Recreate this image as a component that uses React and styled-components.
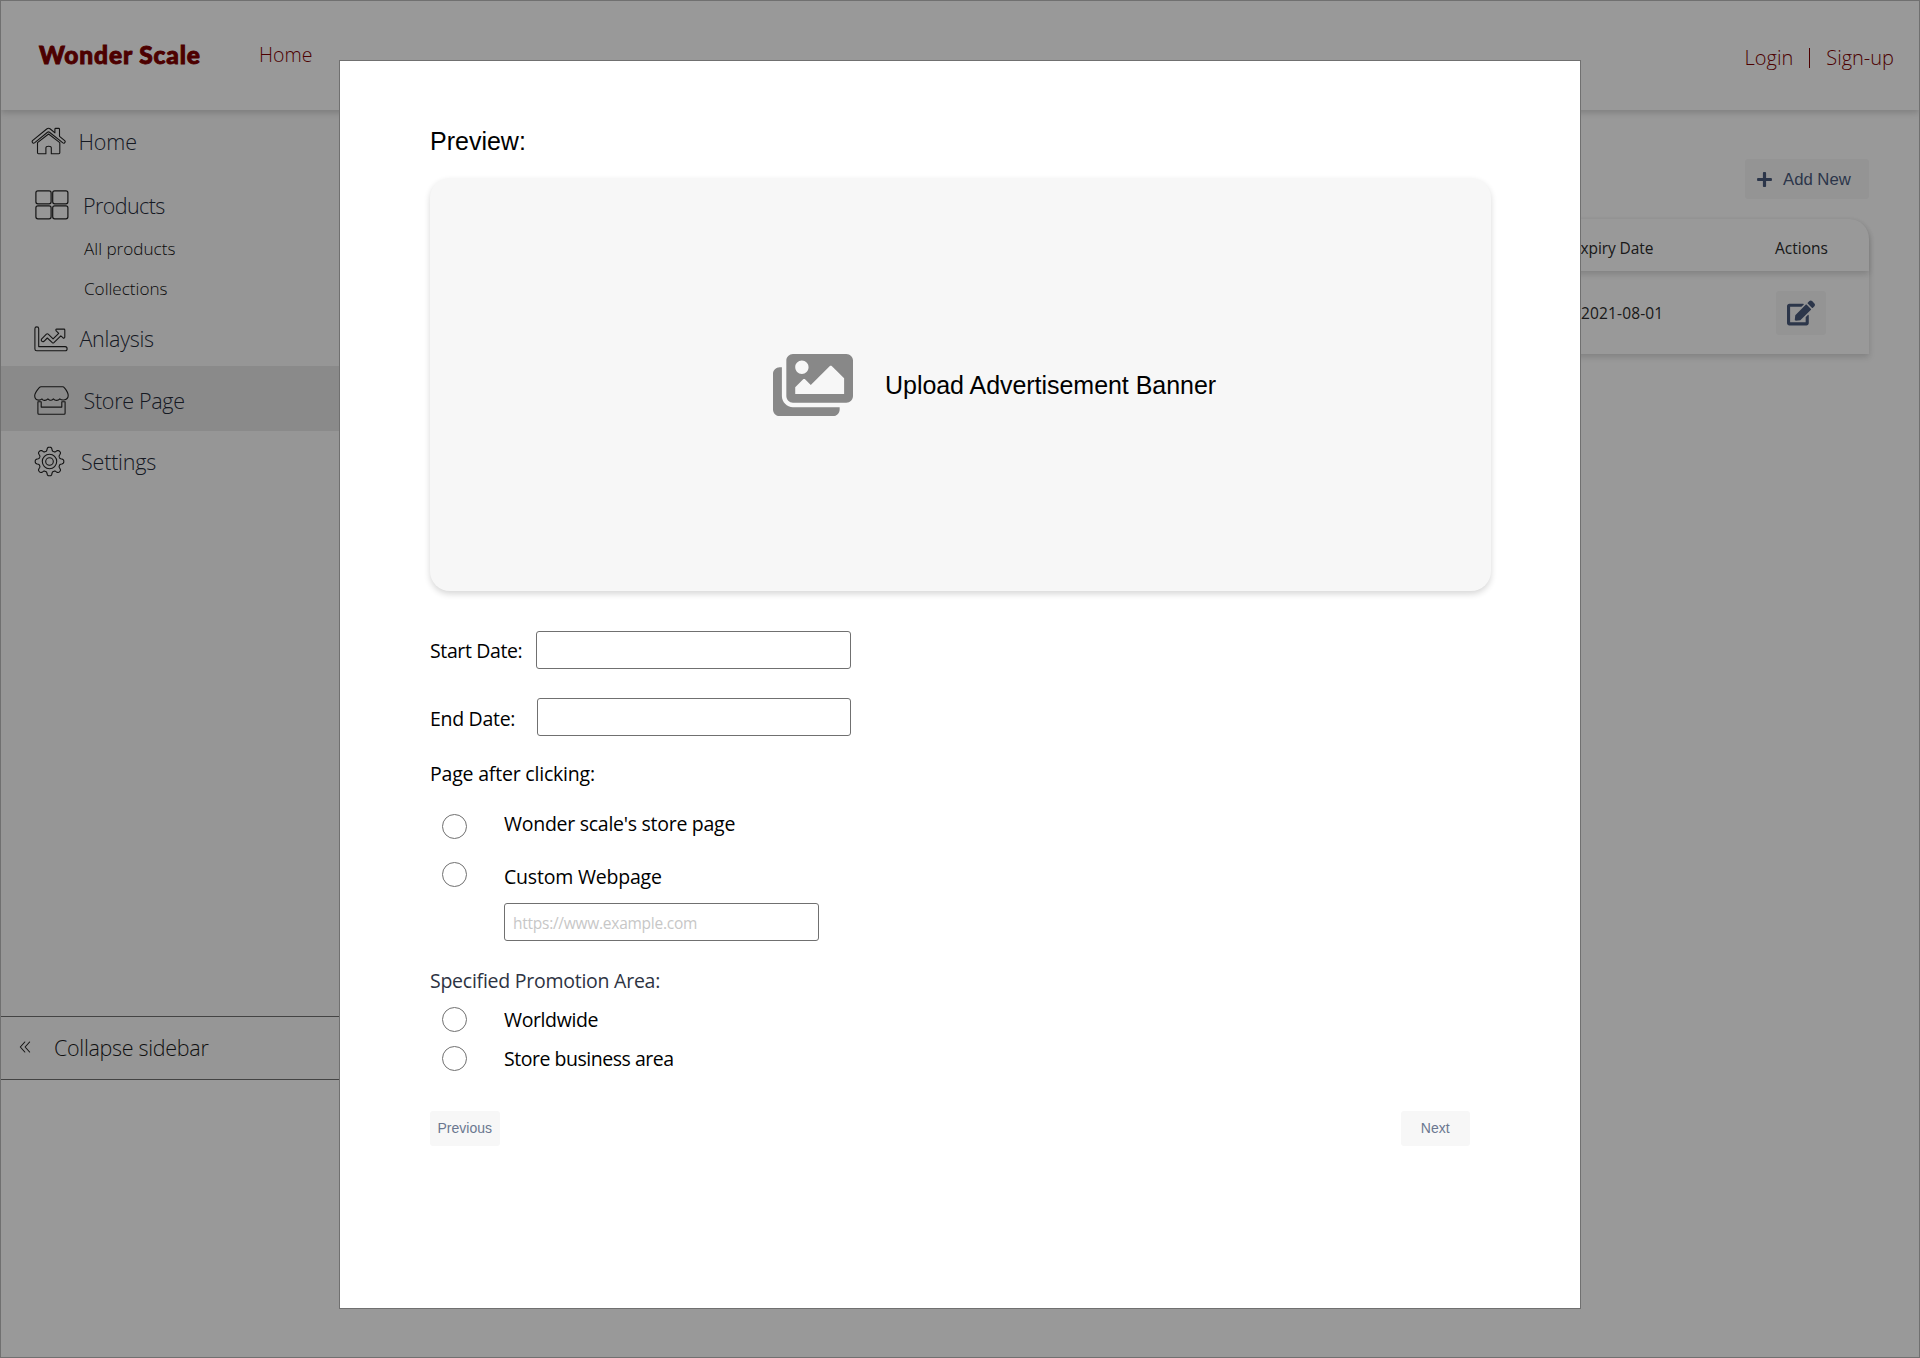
import React from 'react';
import styled, { createGlobalStyle, css } from 'styled-components';
import { FaPlus, FaEdit, FaImages } from 'react-icons/fa';

const GlobalStyle = createGlobalStyle`
  *, *::before, *::after { box-sizing: border-box; }
  body { margin: 0; background: #fff; }
`;

const ui = css`font-family: "Open Sans", "Noto Sans", sans-serif;`;
const arial = css`font-family: "Liberation Sans", Arial, sans-serif;`;
const softShadow = css`box-shadow: 0 3px 6px rgba(0, 0, 0, 0.16);`;

const Page = styled.div`
  ${ui}
  position: relative;
  width: 1920px;
  height: 1358px;
  padding: 1px;
  overflow: hidden;
  background: #fff;
  display: flex;
  flex-direction: column;
  white-space: nowrap;
`;

/* Header */
const Header = styled.header`
  ${softShadow}
  position: relative;
  flex: none;
  height: 109px;
  padding: 0 25px 2px 38px;
  display: flex;
  align-items: center;
  background: #fff;
  color: #800000;
`;
const Logo = styled.div`
  width: 220px;
  font: 900 24.5px/30px Lato, sans-serif;
  letter-spacing: 0.88px;
  -webkit-text-stroke: 0.9px #800000;
`;
const NavLink = styled.a`
  font-size: ${(p) => p.$size || 20}px;
  line-height: 28px;
  font-weight: 300;
  margin-top: ${(p) => p.$drop || 0}px;
`;
const Account = styled.div`
  margin: 7px 0 0 auto;
  display: flex;
  align-items: center;
  gap: 16px;
`;
const Divider = styled.span`
  width: 1px;
  height: 20px;
  background: #800000;
`;

/* Sidebar */
const Body = styled.div`
  flex: 1;
  display: flex;
  align-items: flex-start;
`;
const Sidebar = styled.aside`
  width: 338px;
  height: 970px;
  background: #fafafa;
  display: flex;
  flex-direction: column;
  color: #262c3a;
`;
const Item = styled.div`
  flex: none;
  height: ${(p) => p.$height}px;
  padding-left: ${(p) => p.$indent}px;
  padding-top: ${(p) => p.$drop || 0}px;
  display: flex;
  align-items: center;
  background: ${(p) => (p.$active ? '#e6e6e6' : 'transparent')};
`;
const ItemLabel = styled.span`
  margin-left: ${(p) => p.$gap}px;
  margin-top: ${(p) => p.$drop || 0}px;
  font-size: 21.5px;
  line-height: 30px;
  font-weight: 300;
  letter-spacing: ${(p) => p.$track || 0}px;
`;
const SubList = styled.div`
  display: flex;
  flex-direction: column;
  gap: 19px;
  padding: 0 0 13px 83px;
  color: #111;
`;
const SubItem = styled.a`
  font-size: 17.1px;
  line-height: 21px;
  font-weight: 300;
`;
const Collapse = styled.div`
  height: 64px;
  margin-top: auto;
  padding: 0 0 2px 17.5px;
  display: flex;
  align-items: center;
  border: solid #707070;
  border-width: 1px 0;
  color: #1c1c1c;
`;
const Outline = styled.svg`
  flex: none;
  display: block;
  fill: none;
  stroke: #222;
  stroke-width: ${(p) => p.$weight || 1.1};
  stroke-linejoin: round;
  stroke-linecap: round;
`;

/* Main panel */
const Main = styled.main`
  flex: 1;
  padding: 49px 50px 0 0;
  display: flex;
  flex-direction: column;
  align-items: flex-end;
`;
const AddButton = styled.button`
  ${arial}
  width: 124px;
  height: 40px;
  padding: 1px 0 0 11px;
  display: flex;
  align-items: center;
  gap: 10px;
  border: 0;
  border-radius: 3px;
  background: #f7f7f7;
  color: #4a5a7c;
  font-size: 16.7px;
`;
const Table = styled.div`
  ${softShadow}
  width: 1400px;
  margin-top: 20px;
  border-radius: 20px 20px 0 0;
  background: #fff;
  font-size: 15.5px;
  line-height: 22px;
  color: #2c2c2c;
`;
const TableRow = styled.div`
  height: ${(p) => (p.$head ? 52 : 83)}px;
  padding-top: ${(p) => (p.$head ? 6 : 0)}px;
  display: grid;
  grid-template-columns: 1104px 296px;
  align-items: center;
  border-radius: ${(p) => (p.$head ? '20px 20px 0 0' : '0')};
  ${(p) => p.$head && softShadow}
`;
const DateCell = styled.span`
  padding-left: ${(p) => p.$indent}px;
  letter-spacing: ${(p) => p.$track}px;
`;
const ActionCell = styled.span`
  padding-left: ${(p) => p.$indent}px;
`;
const EditButton = styled.button`
  width: 50px;
  height: 44px;
  padding: 0;
  display: flex;
  align-items: center;
  justify-content: center;
  border: 0;
  border-radius: 3px;
  background: #f7f7f7;
  color: #4a5a7c;
`;

/* Modal */
const Overlay = styled.div`
  position: absolute;
  inset: 0;
  padding: 59px 0 0 338px;
  border: 1px solid #707070;
  background: rgba(0, 0, 0, 0.4);
`;
const Modal = styled.section`
  width: 1242px;
  height: 1249px;
  padding: 65px 0 0 90px;
  border: 1px solid #707070;
  background: #fff;
  color: #000;
  display: flex;
  flex-direction: column;
  align-items: flex-start;
`;
const Title = styled.h1`
  ${arial}
  margin: 0;
  font-size: 25px;
  line-height: 30px;
  font-weight: 400;
`;
const Upload = styled.div`
  ${arial}
  ${softShadow}
  width: 1061px;
  height: 413px;
  margin: 22px 0 40px;
  padding-left: 342.5px;
  display: flex;
  align-items: center;
  gap: 32.5px;
  border-radius: 20px;
  background: #f7f7f7;
  font-size: 25px;
  line-height: 30px;
  letter-spacing: -0.04px;
  svg { color: #888; display: block; flex: none; }
`;
const Field = styled.div`
  display: flex;
  align-items: center;
  width: 421px;
  height: 38px;
  margin-bottom: ${(p) => p.$after}px;
  justify-content: space-between;
`;
const Text = styled.span`
  font-size: 19.5px;
  line-height: 26px;
  letter-spacing: ${(p) => p.$track}px;
  margin-top: ${(p) => p.$shift || 0}px;
`;
const Legend = styled(Text)`
  margin: ${(p) => p.$before}px 0 ${(p) => p.$after}px;
  color: ${(p) => p.$color || '#000'};
`;
const Input = styled.input`
  ${ui}
  width: ${(p) => p.$width || 315}px;
  height: 38px;
  padding: 2px 8px 0 8px;
  border: 1px solid #707070;
  border-radius: 3px;
  outline: 0;
  background: #fff;
  font-size: 15.5px;
  letter-spacing: -0.26px;
  &::placeholder { color: #c7c7c7; opacity: 1; }
`;
const Option = styled.label`
  height: 25px;
  margin: 0 0 ${(p) => p.$after}px 12px;
  display: flex;
  align-items: center;
  gap: 37px;
`;
const Radio = styled.input`
  appearance: none;
  flex: none;
  width: 25px;
  height: 25px;
  margin: 0;
  border: 1px solid #707070;
  border-radius: 50%;
  background: #fff;
`;
const UrlField = styled.div`
  margin-left: 74px;
  height: 38px;
  display: flex;
`;
const Footer = styled.div`
  width: 1040px;
  display: flex;
  justify-content: space-between;
`;
const FooterButton = styled.button`
  ${arial}
  width: 69.5px;
  height: 34.5px;
  padding: 0;
  border: 0;
  border-radius: 3px;
  background: #f7f7f7;
  color: #6b7790;
  font-size: 14px;
`;

const HomeIcon = () => (
  <Outline width="35" height="28" viewBox="31.5 127 35 28">
    <path d="M33 140.6 47.2 129q1.8-1.4 3.6 0l4.6 3.8v-3.6q0-.8.8-.8h3q.8 0 .8.8v7.2l5.2 4.2q.9.9.2 1.8-.9 1.3-2 .5L50 132.3q-1-.8-2 0L35 142.9q-1.2.8-2-.4-.7-.9 0-1.9Z" />
    <path d="M38 142.6v10.2q0 .9.9.9h7.5v-5.9q0-1.6 2.7-1.6t2.7 1.6v5.9h7.6q.9 0 .9-.9v-10.2L49.1 134Z" />
  </Outline>
);
const ProductsIcon = () => (
  <Outline width="34" height="30" viewBox="35.5 190.5 34 30" $weight={1.2}>
    {[[36.4, 191.3], [53.2, 191.3], [36.4, 206.3], [53.2, 206.3]].map(([x, y]) => (
      <rect key={`${x}-${y}`} x={x} y={y} width="15.2" height="13" rx="2" />
    ))}
  </Outline>
);
const AnalysisIcon = () => (
  <Outline width="34" height="27" viewBox="33.5 324.5 34 27">
    <path d="M34.4 327.2q0-1.8 1.9-1.8t1.9 1.8v17.9h26.5q1.9 0 1.9 2.1t-1.9 2.1H36.3q-1.9 0-1.9-1.9Z" />
    <path d="m41 337.6 4.9-4.9q.9-.8 1.8 0l4.9 4.7 5.6-5.6-2.5-2.4q-1-1.5.6-1.8h7.2q.8 0 .8.8v7.2q-.5 1.7-1.9.6l-2.1-1.9-6.9 6.9q-.8.7-1.6 0l-5-4.7-3.3 3.3q-1.3.9-2.3-.2-.9-.9-.2-2Z" />
  </Outline>
);
const StoreIcon = () => (
  <Outline width="35" height="29" viewBox="34.5 385.5 35 29">
    <path d="M41.6 386.3h21.6q1 0 1.6.8 3.9 4.6 3.9 8 0 3.8-4.4 4.4-2.3.3-4-1.1-1.8 1.9-4.2 1.3-1.4-.2-2.2-1.3-1.9 2-4 1.1-.8-.3-1.5-1.1-2 2-4.2 1.3-1.2-.3-1.7-1.3-1.4 1.4-3.3 1.2-4-.3-4-4.3 0-3 4.6-8.2.7-.8 1.8-.8Z" />
    <path d="M38.4 401.2v11.5q0 1 1 1h25.2q1 0 1-1v-11.5h-3.3v5.4H41.7v-5.4Z" />
  </Outline>
);
const gearPoints = Array.from({ length: 160 }, (_, i) => {
  const a = (i / 160) * Math.PI * 2;
  const r = 12.5 + 1.9 * Math.tanh(1.8 * Math.cos(8 * a));
  return `${(15.5 + r * Math.sin(a)).toFixed(2)},${(15.5 - r * Math.cos(a)).toFixed(2)}`;
}).join(' ');
const GearIcon = () => (
  <Outline width="31" height="31" viewBox="0 0 31 31">
    <polygon points={gearPoints} />
    <circle cx="15.5" cy="15.5" r="7.2" />
    <circle cx="15.5" cy="15.5" r="3.8" />
  </Outline>
);
const CollapseIcon = () => (
  <Outline width="12" height="12" viewBox="0 0 12 12">
    <path d="M5.8 1 1.3 6l4.5 5M10.6 1 6.1 6l4.5 5" />
  </Outline>
);

export default function App() {
  return (
    <Page>
      <GlobalStyle />
      <Header>
        <Logo>Wonder Scale</Logo>
        <NavLink $size={19.5} $drop={1}>Home</NavLink>
        <Account>
          <NavLink>Login</NavLink>
          <Divider />
          <NavLink>Sign-up</NavLink>
        </Account>
      </Header>
      <Body>
        <Sidebar>
          <Item $height={62} $indent={30}>
            <HomeIcon />
            <ItemLabel $gap={12.5} $drop={2} $track={-0.1}>Home</ItemLabel>
          </Item>
          <Item $height={66} $indent={34}>
            <ProductsIcon />
            <ItemLabel $gap={14} $drop={2} $track={-0.6}>Products</ItemLabel>
          </Item>
          <SubList>
            <SubItem>All products</SubItem>
            <SubItem>Collections</SubItem>
          </SubList>
          <Item $height={54} $indent={32.5}>
            <AnalysisIcon />
            <ItemLabel $gap={12} $track={-0.3}>Anlaysis</ItemLabel>
          </Item>
          <Item $height={65} $indent={33} $drop={4} $active>
            <StoreIcon />
            <ItemLabel $gap={14.5} $drop={1} $track={-0.3}>Store Page</ItemLabel>
          </Item>
          <Item $height={60} $indent={33} $drop={1}>
            <GearIcon />
            <ItemLabel $gap={16} $track={-0.2}>Settings</ItemLabel>
          </Item>
          <Collapse>
            <CollapseIcon />
            <ItemLabel $gap={23.5} $drop={1} $track={-0.3}>Collapse sidebar</ItemLabel>
          </Collapse>
        </Sidebar>
        <Main>
          <AddButton>
            <FaPlus size={17} />
            Add New
          </AddButton>
          <Table>
            <TableRow $head>
              <DateCell $indent={1103} $track={-0.1}>Expiry Date</DateCell>
              <ActionCell $indent={202}>Actions</ActionCell>
            </TableRow>
            <TableRow>
              <DateCell $indent={1112} $track={0.15}>2021-08-01</DateCell>
              <ActionCell $indent={203}>
                <EditButton aria-label="Edit">
                  <FaEdit size={28} />
                </EditButton>
              </ActionCell>
            </TableRow>
          </Table>
        </Main>
      </Body>

      <Overlay>
        <Modal>
          <Title>Preview:</Title>
          <Upload>
            <FaImages size={80} />
            Upload Advertisement Banner
          </Upload>
          <Field $after={29}>
            <Text $track={-0.38} $shift={2}>Start Date:</Text>
            <Input />
          </Field>
          <Field $after={23}>
            <Text $track={-0.3} $shift={4}>End Date:</Text>
            <Input $width={314} />
          </Field>
          <Legend $track={-0.2} $before={2} $after={27}>Page after clicking:</Legend>
          <Option $after={23}>
            <Radio type="radio" name="target" />
            <Text $track={-0.27} $shift={-6}>Wonder scale's store page</Text>
          </Option>
          <Option $after={16}>
            <Radio type="radio" name="target" />
            <Text $track={-0.2} $shift={4}>Custom Webpage</Text>
          </Option>
          <UrlField>
            <Input placeholder="https://www.example.com" />
          </UrlField>
          <Legend $track={-0.25} $before={27} $after={13} $color="#2d3342">Specified Promotion Area:</Legend>
          <Option $after={14}>
            <Radio type="radio" name="area" />
            <Text $track={-0.38}>Worldwide</Text>
          </Option>
          <Option $after={40}>
            <Radio type="radio" name="area" />
            <Text $track={-0.47}>Store business area</Text>
          </Option>
          <Footer>
            <FooterButton>Previous</FooterButton>
            <FooterButton>Next</FooterButton>
          </Footer>
        </Modal>
      </Overlay>
    </Page>
  );
}
